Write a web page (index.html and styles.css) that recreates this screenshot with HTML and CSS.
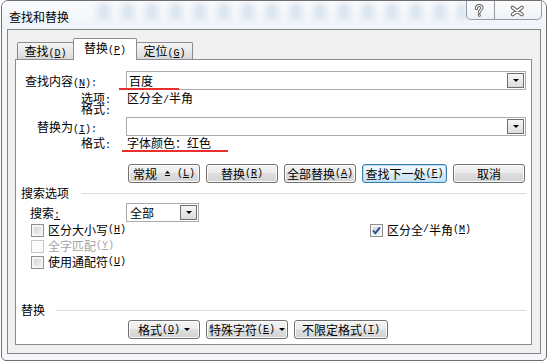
FILE: index.html
```html
<!DOCTYPE html>
<html lang="zh-CN">
<head>
    <meta charset="UTF-8">
    <title>查找和替换</title>
    <link rel="stylesheet" href="styles.css">
</head>
<body>
    <div class="window">
        <div class="titlebar">
            <div class="title-blur"></div>
            <span class="title">查找和替换</span>
            <div class="caption">
                <div class="cap help">
                    <svg width="27" height="18" viewBox="0 0 27 18">
                        <path d="M9.5 7.5C9.5 5.5 10.7 4.5 12.2 4.5C13.8 4.5 15 5.6 15 7C15 8.8 12.3 9.2 12.3 11.3M12.3 14L12.3 14.3" fill="none" stroke="#5c5c5c" stroke-width="3" stroke-linecap="round"/>
                        <path d="M9.5 7.5C9.5 5.5 10.7 4.5 12.2 4.5C13.8 4.5 15 5.6 15 7C15 8.8 12.3 9.2 12.3 11.3M12.3 14L12.3 14.3" fill="none" stroke="#fff" stroke-width="1.2" stroke-linecap="round"/>
                    </svg>
                </div>
                <div class="cap close">
                    <svg width="46" height="18" viewBox="0 0 46 18">
                        <path d="M17.5 6.5L27 13.5M27 6.5L17.5 13.5" stroke="#5c5c5c" stroke-width="3.6" stroke-linecap="round"/>
                        <path d="M17.5 6.5L27 13.5M27 6.5L17.5 13.5" stroke="#fff" stroke-width="1.6" stroke-linecap="round"/>
                    </svg>
                </div>
            </div>
        </div>

        <div class="client">
            <div class="tabs">
                <div class="tab">查找<span class="key">(<u>D</u>)</span></div>
                <div class="tab active">替换<span class="key">(<u>P</u>)</span></div>
                <div class="tab">定位<span class="key">(<u>G</u>)</span></div>
            </div>

            <div class="panel">
                <div class="field-row">
                    <span class="field-label">查找内容<span class="key">(<u>N</u>):</span></span>
                    <div class="combo"><span>百度</span><span class="drop"></span></div>
                </div>
                <div class="info-row first"><span class="info-label">选项<span class="key">:</span></span><span class="info-value">区分全<span class="key">/</span>半角</span></div>
                <div class="info-row"><span class="info-label">格式<span class="key">:</span></span><span class="info-value"></span></div>

                <div class="field-row second">
                    <span class="field-label">替换为<span class="key">(<u>I</u>):</span></span>
                    <div class="combo"><span></span><span class="drop"></span></div>
                </div>
                <div class="info-row fmt"><span class="info-label">格式<span class="key">:</span></span><span class="info-value">字体颜色：红色</span></div>

                <div class="btn-row">
                    <div class="btn w72">常规<svg class="less" width="7" height="7" viewBox="0 0 7 7"><path d="M1 3.5L3.5 0.8L6 3.5Z" fill="#000"/><rect x="1" y="5" width="5" height="1" fill="#000"/></svg><span class="key">(<u>L</u>)</span></div>
                    <div class="btn w72">替换<span class="key">(<u>R</u>)</span></div>
                    <div class="btn w72">全部替换<span class="key">(<u>A</u>)</span></div>
                    <div class="btn w85 focused">查找下一处<span class="key">(<u>F</u>)</span></div>
                    <div class="btn w72">取消</div>
                </div>

                <div class="group-title">搜索选项</div>

                <div class="search-row">
                    <span class="search-label">搜索<u class="key">:</u></span>
                    <div class="combo small"><span>全部</span><span class="drop"></span></div>
                </div>

                <div class="check-row">
                    <label class="check left-col"><span class="cb"></span>区分大小写<span class="key">(<u>H</u>)</span></label>
                    <label class="check"><span class="cb checked"><svg width="11" height="11" viewBox="0 0 11 11"><path d="M2 5.5L4.3 8.2L9 2.3" fill="none" stroke="#2a4f96" stroke-width="1.9"/></svg></span>区分全<span class="key">/</span>半角<span class="key">(<u>M</u>)</span></label>
                </div>
                <div class="check-row">
                    <label class="check disabled"><span class="cb"></span>全字匹配<span class="key">(<u>Y</u>)</span></label>
                </div>
                <div class="check-row">
                    <label class="check"><span class="cb"></span>使用通配符<span class="key">(<u>U</u>)</span></label>
                </div>

                <div class="group-title bottom">替换</div>
                <div class="btn-row bottom-btns">
                    <div class="btn w72">格式<span class="key">(<u>O</u>)</span><span class="caret"></span></div>
                    <div class="btn w82">特殊字符<span class="key">(<u>E</u>)</span><span class="caret"></span></div>
                    <div class="btn w94">不限定格式<span class="key">(<u>T</u>)</span></div>
                </div>

                <i class="mark mark-find"></i>
                <i class="mark mark-format"></i>
            </div>
        </div>
    </div>
</body>
</html>
```

FILE: styles.css
```css
body {
    margin: 0;
    background-color: #ffffff;
    font-family: "Noto Sans CJK SC", sans-serif;
    font-size: 12px;
    color: #000000;
}
.key {
    font-family: "Liberation Mono", monospace;
    font-size: 10px;
    line-height: 0;
}
.window {
    box-sizing: border-box;
    width: 546px;
    height: 361px;
    margin-left: 1px;
    border: 1px solid #6f6f6f;
    border-radius: 7px 7px 5px 5px;
    background-color: #f4f6f9;
    display: flex;
    flex-direction: column;
    overflow: hidden;
}
.titlebar {
    height: 28px;
    flex-shrink: 0;
    display: flex;
    justify-content: space-between;
    align-items: flex-start;
    padding: 0 4px 0 7px;
    position: relative;
    background: linear-gradient(#fafcfe, #eff3f8);
}
.title-blur {
    position: absolute;
    left: 95px;
    top: 2px;
    width: 370px;
    height: 16px;
    background: repeating-linear-gradient(90deg, rgba(150, 178, 206, 0.28) 0 13px, transparent 13px 24px);
    filter: blur(3px);
}
.title {
    margin-top: 9px;
    line-height: 14px;
    position: relative;
}
.caption {
    display: flex;
    height: 19px;
    box-sizing: border-box;
    border: 1px solid #969ba3;
    border-top: none;
    border-radius: 0 0 5px 5px;
    background: linear-gradient(#fdfdfe, #eef1f5);
    overflow: hidden;
    position: relative;
}
.cap {
    height: 18px;
}
.cap svg {
    display: block;
}
.help {
    width: 27px;
    border-right: 1px solid #969ba3;
}
.close {
    width: 46px;
}
.client {
    flex: 1;
    min-height: 0;
    margin: 0 5px 6px 5px;
    border: 1px solid #858585;
    background-color: #f0f0f0;
    display: flex;
    flex-direction: column;
}
.tabs {
    height: 29px;
    flex-shrink: 0;
    display: flex;
    align-items: flex-end;
    padding-left: 9px;
}
.tab {
    box-sizing: border-box;
    width: 57px;
    height: 17px;
    border: 1px solid #898c95;
    border-bottom: none;
    border-radius: 2px 2px 0 0;
    background: linear-gradient(#f5f5f5, #e8e8e8 55%, #d8d8d8);
    text-align: center;
    line-height: 15px;
}
.tab + .tab {
    margin-left: -1px;
}
.tab.active {
    width: 64px;
    height: 22px;
    margin-bottom: -1px;
    background: #ffffff;
    line-height: 17px;
    position: relative;
    z-index: 1;
}
.panel {
    flex: 1;
    min-height: 0;
    margin: 0 8px 8px 7px;
    border: 1px solid #898c95;
    background-color: #ffffff;
    position: relative;
    display: flex;
    flex-direction: column;
    padding: 11px 4px 5px 0;
}
.field-row {
    display: flex;
    align-items: center;
    height: 19px;
    flex-shrink: 0;
}
.field-row.second {
    margin-top: 3px;
}
.field-label {
    box-sizing: border-box;
    width: 110px;
    padding-right: 29px;
    text-align: right;
    line-height: 12px;
}
.combo {
    box-sizing: border-box;
    width: 400px;
    height: 19px;
    border: 1px solid #a9abb1;
    background: #ffffff;
    display: flex;
    align-items: center;
    justify-content: space-between;
    padding: 0 1px 0 2px;
    line-height: 12px;
}
.combo.small {
    width: 73px;
    padding-left: 3px;
}
.drop {
    box-sizing: border-box;
    width: 17px;
    height: 15px;
    border: 1px solid #6f6f6f;
    background: linear-gradient(#f8f8f8, #dcdcdc);
    display: flex;
    align-items: center;
    justify-content: center;
}
.drop::after {
    content: "";
    border-left: 3px solid transparent;
    border-right: 3px solid transparent;
    border-top: 3px solid #000000;
}
.info-row {
    display: flex;
    height: 11px;
    line-height: 11px;
    flex-shrink: 0;
}
.info-row.first {
    margin-top: 2px;
}
.info-row.fmt {
    margin-top: 1px;
    height: 12px;
    line-height: 12px;
}
.info-label {
    box-sizing: border-box;
    width: 110px;
    padding-left: 65px;
}
.info-value {
    padding-left: 1px;
}
.btn-row {
    display: flex;
    gap: 6px;
    padding-left: 112px;
    margin-top: 15px;
    flex-shrink: 0;
}
.btn {
    box-sizing: border-box;
    height: 19px;
    border: 1px solid #707070;
    border-radius: 3px;
    background: linear-gradient(#f3f3f3, #ececec 45%, #dfdfdf 50%, #d2d2d2);
    box-shadow: inset 0 0 0 1px rgba(255, 255, 255, 0.85);
    display: flex;
    align-items: center;
    justify-content: center;
    line-height: 12px;
}
.btn.focused {
    border-color: #3c7fb1;
    background: linear-gradient(#f3f9fd, #e6f2fa 45%, #d7eaf6 50%, #cbe2f2);
    box-shadow: inset 0 0 0 1px #b4dcf7;
}
.w72 { width: 72px; }
.w82 { width: 82px; }
.w85 { width: 85px; }
.w94 { width: 94px; }
.less {
    margin: 0 6px 0 7px;
}
.caret {
    margin-left: 4px;
    border-left: 3px solid transparent;
    border-right: 3px solid transparent;
    border-top: 3px solid #000000;
}
.group-title {
    display: flex;
    align-items: center;
    height: 12px;
    padding-left: 5px;
    line-height: 12px;
    margin-top: 4px;
    flex-shrink: 0;
}
.group-title::after {
    content: "";
    flex: 1;
    height: 1px;
    margin: 0 1px 0 12px;
    background-color: #d5dfe5;
}
.group-title.bottom {
    margin-top: auto;
}
.group-title.bottom::after {
    margin-left: 11px;
}
.bottom-btns {
    margin-top: 4px;
}
.search-row {
    display: flex;
    align-items: center;
    height: 19px;
    margin-top: 4px;
    flex-shrink: 0;
    line-height: 12px;
}
.search-label {
    box-sizing: border-box;
    width: 110px;
    padding-left: 14px;
}
.check-row {
    display: flex;
    align-items: center;
    height: 16px;
    padding-left: 15px;
    line-height: 12px;
    flex-shrink: 0;
}
.check {
    display: flex;
    align-items: center;
}
.check.left-col {
    width: 339px;
}
.check.disabled {
    color: #a6a6a6;
}
.cb {
    box-sizing: border-box;
    width: 13px;
    height: 13px;
    margin-right: 4px;
    border: 1px solid #8f8f8f;
    background: linear-gradient(135deg, #c9cdd3, #f6f6f6);
    box-shadow: inset 0 0 0 2px #f4f4f4;
    display: flex;
    align-items: center;
    justify-content: center;
}
.check.disabled .cb {
    border-color: #c7c7c7;
    background: #fbfbfb;
    box-shadow: none;
}
.mark {
    position: absolute;
    height: 2px;
    background-color: #e8302f;
}
.mark-find {
    left: 103px;
    top: 28px;
    width: 60px;
}
.mark-format {
    left: 106px;
    top: 90px;
    width: 106px;
}
```
